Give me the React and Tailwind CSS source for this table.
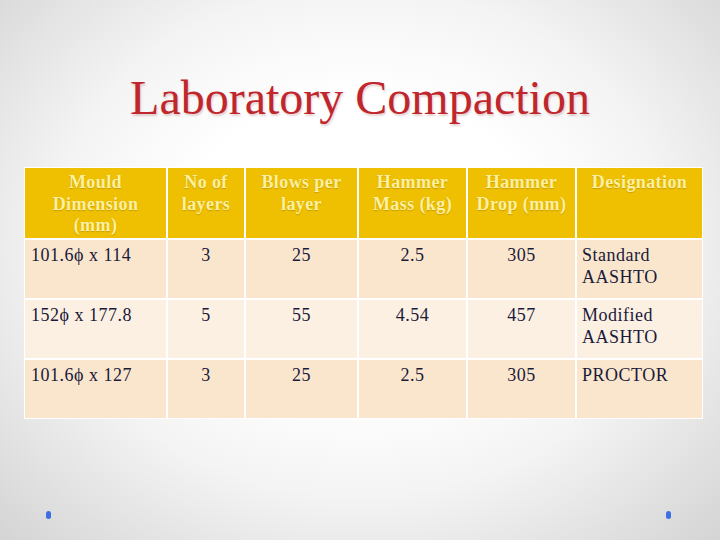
import React from "react";

const headers = [
  ["Mould", "Dimension", "(mm)"],
  ["No of", "layers"],
  ["Blows per", "layer"],
  ["Hammer", "Mass (kg)"],
  ["Hammer", "Drop (mm)"],
  ["Designation"],
];

const rows = [
  ["101.6ϕ x 114", "3", "25", "2.5", "305", ["Standard", "AASHTO"]],
  ["152ϕ x 177.8", "5", "55", "4.54", "457", ["Modified", "AASHTO"]],
  ["101.6ϕ x 127", "3", "25", "2.5", "305", ["PROCTOR"]],
];

export default function App() {
  return (
    <div
      className="relative w-[720px] h-[540px] overflow-hidden bg-[radial-gradient(ellipse_at_50%_45%,#ffffff_35%,#f4f4f4_60%,#d4d4d4_100%)]"
      style={{ fontFamily: '"Liberation Serif", "DejaVu Serif", serif' }}
    >
      <div className="pt-[70px] flex justify-center">
        <h1 className="text-[48px] leading-[56px] text-[#c0272d] [text-shadow:1px_2px_2px_rgba(180,120,120,0.35)]">
          Laboratory Compaction
        </h1>
      </div>

      <div className="mt-[41px] ml-[24px] w-[679px] bg-white p-[1px] grid grid-cols-[141px_76px_111px_107px_107px_125px] grid-rows-[70px_58px_58px_58px] gap-[2px]">
        {headers.map((h, i) => (
          <div
            key={i}
            className="bg-[#efbf02] text-[#fdf0a0] text-[18px] tracking-[0.4px] leading-[21.5px] text-center pt-[4px] font-bold [text-shadow:0_1px_1px_rgba(120,90,0,0.3)]"
          >
            {h.map((l, j) => (
              <div key={j}>{l}</div>
            ))}
          </div>
        ))}
        {rows.map((r, ri) =>
          r.map((c, ci) => (
            <div
              key={ri + "-" + ci}
              className={
                (ri === 1 ? "bg-[#fcf0e3] " : "bg-[#fae6cd] ") +
                "text-[#1b1a3a] text-[18px] tracking-[0.5px] leading-[22px] pt-[4px] " +
                (ci === 0 ? "pl-[6px] text-left" : ci === 5 ? "pl-[5px] text-left" : "text-center")
              }
            >
              {Array.isArray(c) ? c.map((l, j) => <div key={j}>{l}</div>) : c}
            </div>
          ))
        )}
      </div>

      <div className="absolute left-[46px] top-[511px] w-[5px] h-[8px] rounded-full bg-[#3b6fe3]" />
      <div className="absolute left-[666px] top-[511px] w-[5px] h-[8px] rounded-full bg-[#3b6fe3]" />
    </div>
  );
}
